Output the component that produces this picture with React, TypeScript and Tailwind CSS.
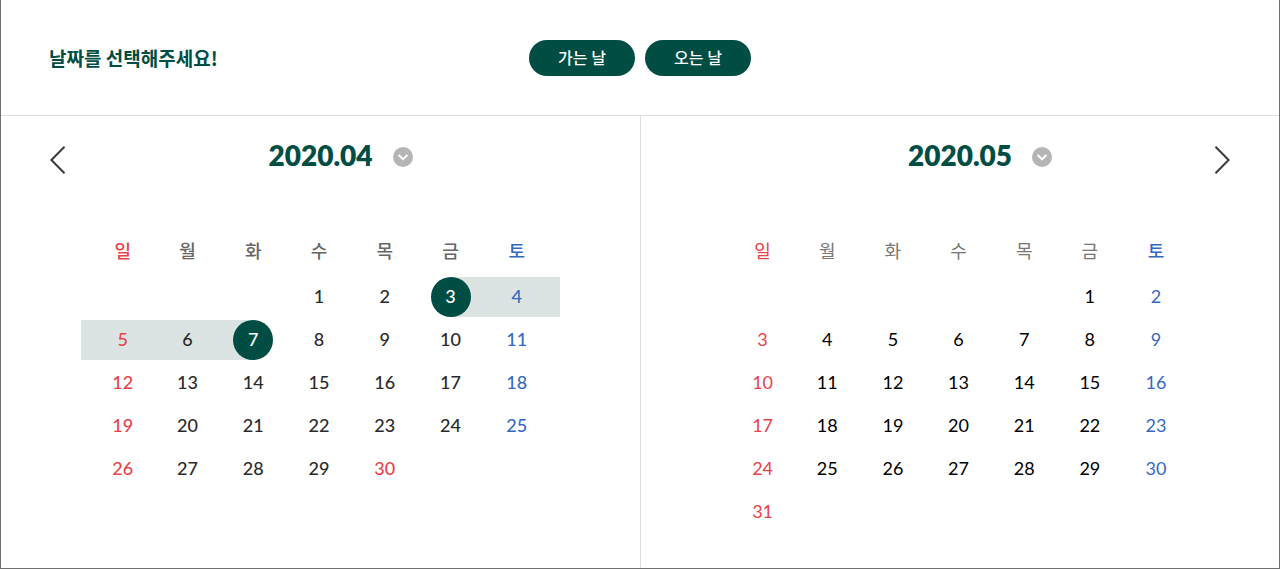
import React, { useState } from "react";

type Month = {
  label: string;
  offset: number;
  days: number;
  holidays: number[];
  rangeStart?: number;
  rangeEnd?: number;
  sundayClass: string;
  weekdayClass: string;
  dayClass: string;
};

const WEEKDAYS = ["일", "월", "화", "수", "목", "금", "토"];

const APRIL: Month = {
  label: "2020.04",
  offset: 3,
  days: 30,
  holidays: [30],
  rangeStart: 3,
  rangeEnd: 7,
  sundayClass: "font-medium text-[#e8434a]",
  weekdayClass: "font-medium text-[#666666]",
  dayClass: "text-[#2a2a2a]",
};

const MAY: Month = {
  label: "2020.05",
  offset: 5,
  days: 31,
  holidays: [],
  sundayClass: "font-normal text-[#e8434a]",
  weekdayClass: "font-normal text-[#777777]",
  dayClass: "text-black",
};

function weeksOf(month: Month): (number | null)[][] {
  const count = Math.ceil((month.offset + month.days) / 7);
  return Array.from({ length: count }, (_, w) =>
    Array.from({ length: 7 }, (_, d) => {
      const n = w * 7 + d - month.offset + 1;
      return n >= 1 && n <= month.days ? n : null;
    }),
  );
}

function edgePadding(column: number) {
  if (column === 0) return "pl-2.5";
  if (column === 6) return "pr-2.5";
  return "";
}

function columnWidth(column: number) {
  if (column === 0) return "w-[15.4%]";
  if (column === 6) return "w-[16%]";
  return "";
}

function ArrowButton({ direction }: { direction: "prev" | "next" }) {
  return (
    <button type="button" aria-label={direction === "prev" ? "이전 달" : "다음 달"} className="mt-2 cursor-pointer">
      <svg width="16" height="28" viewBox="0 0 16 28" fill="none" stroke="#3a3a3a" strokeWidth="2">
        <path d={direction === "prev" ? "M14.5 0.8 L1.4 14 L14.5 27.2" : "M1.5 0.8 L14.6 14 L1.5 27.2"} />
      </svg>
    </button>
  );
}

function MonthMenuButton({ label }: { label: string }) {
  return (
    <button type="button" aria-label={`${label} 월 선택`} className="mt-0.5 ml-5 cursor-pointer">
      <svg width="20" height="20" viewBox="0 0 20 20" fill="none">
        <circle cx="10" cy="10" r="10" fill="#b5b5b5" />
        <path d="M5.6 8 L10 12.2 L14.4 8" stroke="#ffffff" strokeWidth="2" />
      </svg>
    </button>
  );
}

function Calendar({ month, arrow }: { month: Month; arrow: "prev" | "next" }) {
  const { rangeStart = 0, rangeEnd = 0 } = month;

  const bandClass = (n: number | null) => {
    if (n === null || !rangeStart) return "";
    if (n === rangeStart) return "bg-[linear-gradient(to_right,transparent_50%,#dbe4e2_50%)]";
    if (n === rangeEnd) return "bg-[linear-gradient(to_left,transparent_50%,#dbe4e2_50%)]";
    return n > rangeStart && n < rangeEnd ? "bg-[#dbe4e2]" : "";
  };

  const colorClass = (n: number, column: number) => {
    if (n === rangeStart || n === rangeEnd) return "bg-[#004d43] text-white";
    if (column === 0 || month.holidays.includes(n)) return "text-[#e8434a]";
    if (column === 6) return "text-[#3569c0]";
    return month.dayClass;
  };

  return (
    <section aria-label={month.label} className="pb-8">
      <div className="grid grid-cols-[1fr_auto_1fr] items-center px-[49px] pt-5">
        <div className="flex">{arrow === "prev" && <ArrowButton direction="prev" />}</div>
        <h2 className="text-[28px] leading-[39px] font-extrabold text-[#004d43]">{month.label}</h2>
        <div className="flex items-center justify-between">
          <MonthMenuButton label={month.label} />
          {arrow === "next" && <ArrowButton direction="next" />}
        </div>
      </div>
      <table className="mx-auto mt-14 w-3/4 table-fixed border-collapse">
        <colgroup>
          {WEEKDAYS.map((name, i) => (
            <col key={name} className={columnWidth(i)} />
          ))}
        </colgroup>
        <thead>
          <tr>
            {WEEKDAYS.map((name, i) => (
              <th
                key={name}
                scope="col"
                className={`h-11 pt-0 pb-1 text-lg ${edgePadding(i)} ${
                  i === 0 ? month.sundayClass : i === 6 ? "font-medium text-[#3569c0]" : month.weekdayClass
                }`}
              >
                {name}
              </th>
            ))}
          </tr>
        </thead>
        <tbody>
          {weeksOf(month).map((week, w) => (
            <tr key={w}>
              {week.map((n, i) => (
                <td key={i} className="h-[43px] p-0">
                  <div className={`flex h-10 justify-center ${edgePadding(i)} ${bandClass(n)}`}>
                    {n !== null && (
                      <button
                        type="button"
                        className={`size-10 cursor-pointer rounded-full pb-0.5 text-lg ${
                          rangeStart ? "font-medium" : "font-normal"
                        } ${colorClass(n, i)}`}
                      >
                        {n}
                      </button>
                    )}
                  </div>
                </td>
              ))}
            </tr>
          ))}
        </tbody>
      </table>
    </section>
  );
}

export default function App() {
  const [trip, setTrip] = useState<"depart" | "return">("depart");
  const pill =
    "h-9 w-[106px] cursor-pointer rounded-full bg-[#004d43] pb-0.5 text-base font-medium text-white";

  return (
    <main className="flex min-h-screen flex-col border-x border-b border-[#707070] bg-white font-['Lato','Noto_Sans_CJK_KR',sans-serif]">
      <header className="grid grid-cols-[1fr_auto_1fr] items-center border-b border-[#dddddd] px-12 pt-10 pb-[39px]">
        <h1 className="text-[19px] leading-9 font-bold text-[#004d43] font-['Noto_Sans_CJK_KR',sans-serif]">
          날짜를 선택해주세요!
        </h1>
        <div className="flex gap-2.5 font-['Noto_Sans_CJK_KR',sans-serif]">
          <button type="button" aria-pressed={trip === "depart"} onClick={() => setTrip("depart")} className={pill}>
            가는 날
          </button>
          <button type="button" aria-pressed={trip === "return"} onClick={() => setTrip("return")} className={pill}>
            오는 날
          </button>
        </div>
      </header>
      <div className="grid flex-1 grid-cols-2">
        <Calendar month={APRIL} arrow="prev" />
        <div className="border-l border-[#dddddd]">
          <Calendar month={MAY} arrow="next" />
        </div>
      </div>
    </main>
  );
}
